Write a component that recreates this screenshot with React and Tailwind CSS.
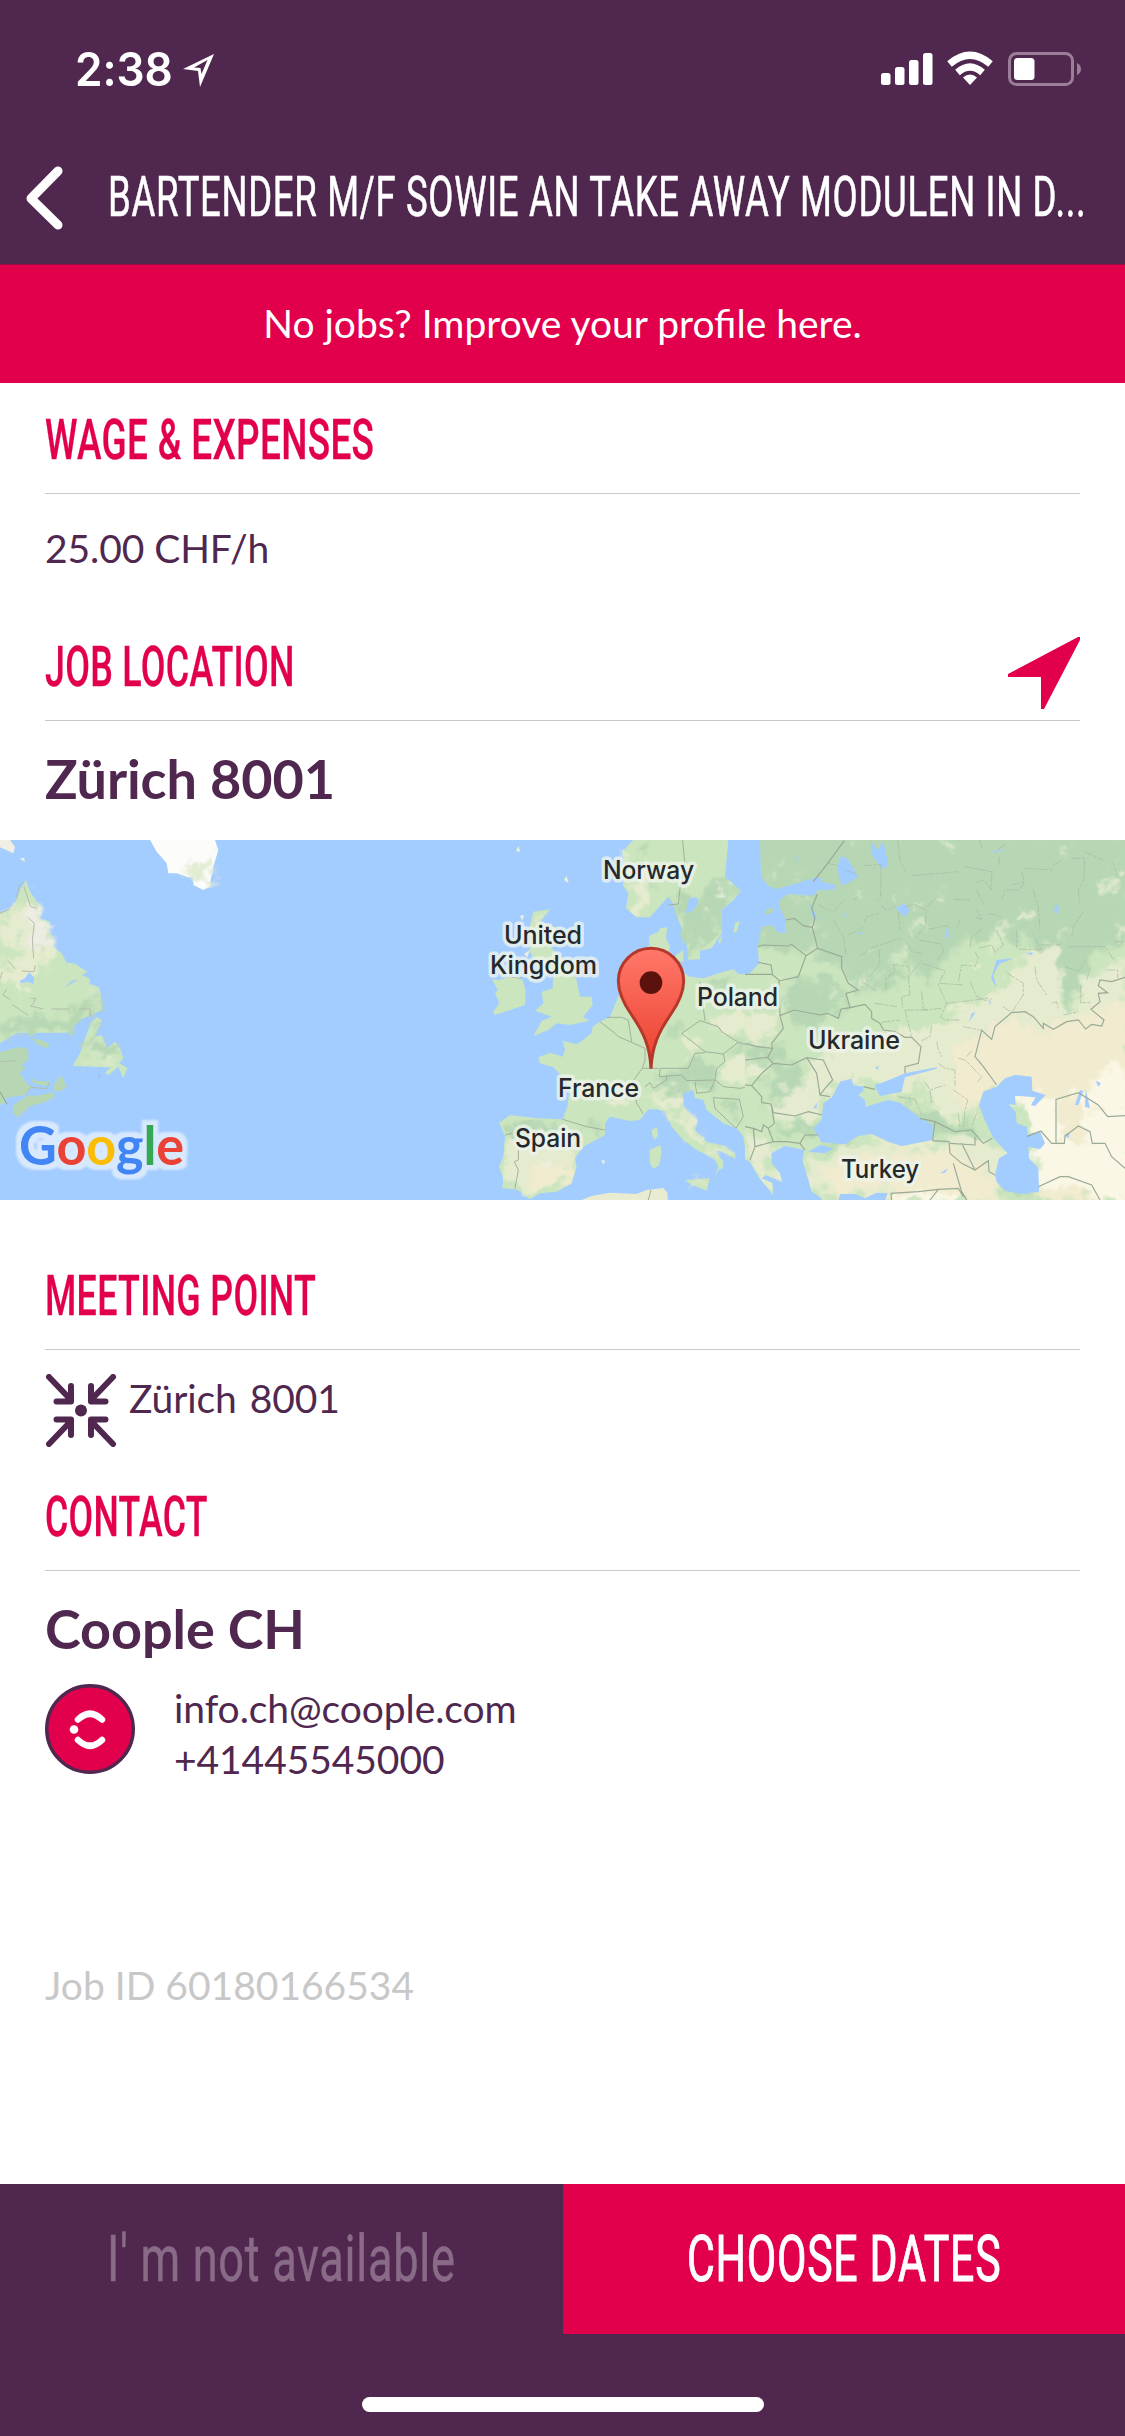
import { useLayoutEffect, useRef, useState } from "react";

/* Condensed display lettering: squeezed horizontally to a given width. */
function Condensed({ width, className = "", children }) {
  const ref = useRef(null);
  const [scale, setScale] = useState(0.6);
  useLayoutEffect(() => {
    setScale(width / ref.current.offsetWidth);
  }, [width]);
  return (
    <span className="block shrink-0 whitespace-nowrap" style={{ width }}>
      <span
        ref={ref}
        className={"inline-block origin-left font-['Roboto',sans-serif] " + className}
        style={{ transform: `scaleX(${scale})` }}
      >
        {children}
      </span>
    </span>
  );
}

function Heading({ className, width, children, icon }) {
  return (
    <div className={"mx-[45px] flex items-center justify-between border-b border-[#c8c8c8] " + className}>
      <Condensed width={width} className="text-[56px] leading-none font-medium tracking-[0.5px] text-[#e2004d] [-webkit-text-stroke:0.3px_#e2004d]">
        {children}
      </Condensed>
      {icon}
    </div>
  );
}

function StatusBar() {
  return (
    <div className="flex h-[138px] items-center justify-between pr-[43px] pl-[75px] text-white">
      <div className="flex items-center">
        <Condensed width={98} className="text-[46px] leading-none font-semibold !font-['Inter',sans-serif]">
          2:38
        </Condensed>
        <svg className="mt-[5px] ml-[9px]" width="32" height="35" viewBox="0 0 32 35">
          <path
            d="M32 0 18 33 16 17 1 15ZM25.500 6 12 13.500 18.500 14 19.500 20Z"
            fill="white"
            fillRule="evenodd"
          />
        </svg>
      </div>
      <svg width="201" height="36" viewBox="881 51 201 36" fill="white">
        <rect x="881" y="73" width="9.500" height="12" rx="2.500" />
        <rect x="895" y="67" width="9.500" height="18" rx="2.500" />
        <rect x="909" y="60" width="9.500" height="25" rx="2.500" />
        <rect x="923" y="53" width="9.500" height="32" rx="2.500" />
        <path d="M970 85 963 77.500Q970 71.500 977 77.500Z" />
        <g fill="none" stroke="white" strokeWidth="7">
          <path d="M949.500 64Q970 46.500 990.500 64" />
          <path d="M957.500 72.500Q970 61.500 982.500 72.500" />
        </g>
        <rect x="1009.500" y="53.500" width="63" height="31" rx="7" fill="none" stroke="#9b7f98" strokeWidth="3" />
        <rect x="1014" y="58" width="20.500" height="22" rx="3.500" />
        <path d="M1077 63Q1081 65 1081 69T1077 75Z" fill="#9b7f98" />
      </svg>
    </div>
  );
}

const MAP_LABELS = [
  { text: "Norway", x: 603, y: 39, w: 91 },
  { text: "United", x: 504, y: 104, w: 78 },
  { text: "Kingdom", x: 490, y: 134, w: 107 },
  { text: "Poland", x: 697, y: 166, w: 81 },
  { text: "Ukraine", x: 808, y: 209, w: 92 },
  { text: "France", x: 558, y: 257, w: 81 },
  { text: "Spain", x: 515, y: 307, w: 66 },
  { text: "Turkey", x: 841, y: 338, w: 78 },
];

function AmericaLand() {
  return (
    <g transform="translate(0 -10) scale(0.33333)">
      <g fill="#cbe5be">
        <path d="M0 250 20 242 45 220 60 180 78 150 90 185 125 235 120 265 150 275 150 305 163 335 160 350 185 370 200 398 222 400 262 425 245 435 268 445 270 462 298 472 306 520 303 542 270 555 235 572 200 608 50 608 0 640Z" />
        <path d="M0 30H30L45 50 40 70 0 52Z" fill="#f0efe4" />
        <path d="M60 85 72 83 75 97Z" fill="#f0efe4" />
        <path d="M290 562 305 570 285 620 305 615 322 655 345 635 360 655 370 685 358 700 382 715 370 745 355 710 325 735 315 728 332 712 218 708 240 670 255 625 275 575Z" />
      </g>
      <g fill="#b7d7b4">
        <path d="M0 665 60 650 85 658 85 690 65 705 77 712 60 730 80 760 95 772 75 795 20 803 15 818 0 825Z" />
        <path d="M85 795 40 825 38 850 55 862 90 828 130 818 165 800 160 785 110 798ZM182 735 200 770 185 783 160 782 162 765ZM90 738 105 752 150 755 140 768 100 760ZM95 623 130 632 150 645 140 655 110 643Z" />
      </g>
      <path d="M450 30 470 65 500 100 505 130 530 130 565 142 580 140 580 165 610 180 630 170 632 150 640 110 655 60 645 30Z" fill="#fcfcfb" />
      <g filter="url(#terrain)">
        <path d="M10 250 60 220 95 230 140 330 150 370 130 430 60 460 0 450V260Z" fill="#e5ebcf" />
        <path d="M85 190 120 250 145 300 130 350 90 330 80 260Z" fill="#eeede4" />
        <path d="M0 330 50 320 55 400 25 410 0 380ZM130 400 210 400 200 440 130 440Z" fill="#cbe5be" />
        <path d="M0 585 60 575 150 560 200 555 280 490 300 530 210 590 0 620ZM245 670 290 575 300 585 280 640 340 645 355 670 300 690 270 660Z" fill="#b7d7b4" />
        <path d="M550 140 575 90 580 130 640 70 635 120 610 170ZM230 700 300 690 350 680 340 700Z" fill="#e3ecd3" />
        <path d="M60 450 80 480 60 500ZM260 480 280 490 270 500ZM260 660 290 645 280 665Z" fill="#f4f0e0" />
      </g>
      <path d="M60 452 75 445 88 427 103 443 100 463 85 455 62 460ZM195 473 215 452 235 448Z" fill="#a3ccff" />
      <g className="fill-none stroke-[#b3bda9] stroke-[3]">
        <path d="M85 263 103 280 97 330 101 385M106 405 102 425 65 423M25 392 45 417M0 445 8 425M8 495 20 478M8 495 30 508M35 523 85 556M92 505H108L100 520 92 528 130 537M155 537H210M237 537H271V560M72 170 92 230 110 235M50 205 58 165 70 155M0 250 28 238M0 695 45 692M82 785 92 772 140 776 148 758M298 730V745" />
        <path d="M0 785 21 823" stroke="#8f9c8c" />
      </g>
    </g>
  );
}

function WestEurope() {
  return (
    <g transform="translate(370 -10) scale(0.33333)">
      <g fill="#cbe5be">
        <path d="M790 30 757 65 765 110 758 165 775 190 768 235 800 262 840 262 895 200 912 225 925 270 950 330 955 390 990 388 990 362 1025 355 1055 310 1055 240 1090 210 1113 183 1065 140 1075 30Z" />
        <path d="M838 345 837 318 865 305 870 295 892 292 888 325 900 350 890 380 920 415 960 440 1000 445 1060 425 1090 418 1105 432 1130 433V985L1120 920 1100 895 1060 880 1010 840 1000 810 975 805 970 780 938 790 942 830 980 875 975 900 1010 935 1065 948 1095 972 1097 988 1060 965 1035 960 1060 995 1058 1015 1045 1020 1030 1050 1045 1010 1035 990 1005 972 980 960 940 930 905 890 885 845 860 838 835 838 810 870 780 873 720 860 705 880 705 915 640 950 615 985 620 1010 605 1060 560 1085 510 1090 480 1108 440 1078 397 1075 400 1045 387 1010 400 980 405 920 388 878 420 855 500 865 578 868 592 830 597 790 585 750 550 712 510 700 505 682 540 668 578 680 585 660 578 632 620 643 640 630 665 608 668 590 690 575 720 560 745 500 760 450Z" />
        <path d="M490 245 540 238 510 275 555 290 555 320 540 350 575 380 600 420 620 450 630 500 665 500 668 525 640 560 658 572 600 585 560 580 535 600 490 618 515 572 545 560 495 542 520 520 515 485 548 475 550 430 510 420 480 365 475 310Z" />
        <path d="M366 447 385 450 420 440 455 445 467 480 465 525 375 555 370 545 388 520 375 490 383 480Z" />
        <path d="M845 900 860 892 865 915 855 930 847 915ZM838 960 870 945 875 965 868 1005 850 1017 840 1000ZM945 1050 1020 1045 1010 1082 960 1062ZM915 378 940 360 940 398 920 390ZM1095 280 1110 272 1100 305 1090 308ZM1045 330 1057 315 1050 345Z" />
        <path d="M582 150 590 138 596 160ZM438 62 446 48 450 66ZM450 257 462 255 457 272ZM693 992 704 990 702 1004ZM462 372 480 360 472 382Z" fill="#eef0dd" />
      </g>
      <path d="M635 1110 665 1098 720 1088 800 1092 830 1080 880 1074 893 1090V1110Z" fill="#e9ecd0" />
      <clipPath id="west-land">
        <path d="M745 30H1075L1065 140 1113 183 1055 240V310L990 362V390L960 440 1090 418 1130 433V985L1060 880 1010 840 970 780 938 790 942 830 885 845 850 838 780 873 705 865 705 915 640 950 615 985 620 1010 605 1060 560 1085 480 1108 397 1070 405 920 395 870 578 868 597 790 590 740 690 575 745 500 838 345 890 380 960 440 950 380 895 200 800 262 768 235Z" />
      </clipPath>
      <g filter="url(#terrain)" clipPath="url(#west-land)">
        <path d="M910 200 1000 190 1060 140 1110 185 1055 240 1050 310 990 360 960 380 930 280Z" fill="#b7d7b4" />
        <path d="M400 880 570 875 560 900 420 925ZM860 740 910 720 990 690 1040 720 1040 770 940 780 860 780ZM640 890 700 880 695 925ZM1010 460 1090 430 1060 480ZM1080 650 1130 640V680ZM880 600 930 580 930 620ZM1050 820 1100 800 1100 870ZM800 190 830 110 860 170ZM790 60 850 40 830 90Z" fill="#b7d7b4" />
        <path d="M410 930 500 905 600 940 610 1000 590 1060 470 1090 400 1070ZM820 790 900 790 930 770 935 830 850 830ZM690 815 770 770 790 820 740 850ZM1010 560 1130 550V620L1050 600ZM1060 700 1130 670V760L1060 760ZM930 620 1000 640 950 680ZM800 100 850 110 830 240 785 240Z" fill="#e5ebcf" />
        <path d="M470 1020 600 1000 590 1060 480 1070ZM560 910 610 930 590 950Z" fill="#f1ebcf" />
        <path d="M1000 240 1030 250 1000 258ZM1050 170 1090 190 1050 200ZM750 60 770 90 760 110ZM520 1000 540 990 545 1015Z" fill="#f5f3e6" />
      </g>
      <g fill="#e5ebcf" filter="url(#terrain)">
        <path d="M900 860 950 850 1000 930 980 940ZM1010 950 1080 965 1040 980ZM970 1055 1010 1055 1000 1070ZM495 250 530 245 500 280 485 300Z" />
      </g>
      <path d="M958 205 980 202 985 220 965 245 947 250Z" fill="#a3ccff" />
      <g className="fill-none stroke-[#a3b09d] stroke-[3]">
        <path d="M938 30 945 110 930 175 925 222 895 225M578 868 650 890 705 900M690 575 735 610 745 620 780 635 825 655M710 562 755 562 775 570 785 635M825 655 825 690 817 715 787 755M817 715H865M935 610 990 572 1045 590 1055 605 1105 637 1060 672 1005 665 935 610M990 455 1005 572M1105 637 1130 645M1005 668 975 670 955 715 870 715 868 740 935 735 950 752 1035 750 1040 715 1065 695 1060 672M825 770 840 758 850 775 890 750 890 735M787 755 800 820 820 852M1035 750 1060 770 1110 775 1140 770M975 755 980 790 1020 785 1035 750M1030 803 1108 808 1120 860 1098 895 1035 835ZM445 960 445 990 433 995 445 1020 435 1075M405 915 425 910M843 1080 835 1110M410 440 455 445" />
      </g>
    </g>
  );
}

function EastEurope() {
  return (
    <g transform="translate(745 -10) scale(0.33333)">
      <path d="M0 30H1140V1110H0Z" fill="#cbe5be" />
      <g filter="url(#terrain)">
        <path d="M-10 0H1160V330L1040 370 1000 480 975 545 950 500 940 370 860 340 750 320 640 350 590 390 560 470 480 370 400 430 350 490 270 400 200 370 50 350 20 290 60 200Z" fill="#b7d7b4" />
        <path d="M110 480 200 440 290 460 300 540 180 590 110 545ZM60 740 140 700 190 770 170 800 60 820ZM0 640 90 640 130 700 0 690ZM480 810 600 870 700 890 720 930 560 910 480 830ZM90 900 220 880 200 915 110 930ZM380 490 420 400 500 420 440 460ZM220 940 330 930 300 960ZM750 1060 860 1100 800 1110Z" fill="#b7d7b4" />
        <path d="M0 550 110 560 60 640 0 620ZM190 690 280 660 440 610 540 600 600 560 780 470 860 350 940 350 950 540 1000 540 1010 440 1140 390V560L880 610 700 620 690 700 620 760 660 870 560 830 540 760 480 790 400 770 300 740 230 790 160 860 90 820 190 760Z" fill="#e5ebcf" />
        <path d="M0 700 60 690 60 740 0 780ZM90 830 220 820 200 880 90 870ZM0 890 90 950 60 1000 110 1060 80 1100 0 990ZM180 990 370 935 560 950 720 920 790 970 750 1090 420 1100 200 1090Z" fill="#e5ebcf" />
        <path d="M620 650 700 620 800 560 900 600 1010 560 1100 520 1160 510V1110H880V800H780L715 780 660 860 620 760ZM230 1010 500 960 620 960 730 1040 760 1110H440L420 1080 250 1080Z" fill="#f1ebcf" />
        <path d="M800 790 900 790 960 810 1060 760 1090 710 1160 730V1110H1080L960 1060 880 1070 860 900ZM440 1090H640V1120H440ZM1000 890 1040 880 1050 930Z" fill="#faf7e6" />
        <path d="M920 820 1000 790 1030 850 1010 910 1040 940 960 940ZM1050 820 1080 850 1040 850Z" fill="#f1ebcf" />
        <path d="M80 100 100 110 95 160 70 140ZM310 30 350 30 330 60ZM230 480 280 490 250 510Z" fill="#cbe5be" />
        <g fill="#e3ecce">
          <circle cx="612" cy="40" r="12" />
          <circle cx="152" cy="145" r="7" />
          <circle cx="170" cy="207" r="8" />
          <circle cx="340" cy="190" r="8" />
          <circle cx="435" cy="210" r="9" />
          <circle cx="518" cy="207" r="8" />
          <circle cx="580" cy="202" r="10" />
          <circle cx="522" cy="285" r="12" />
          <circle cx="460" cy="375" r="9" />
          <circle cx="380" cy="370" r="8" />
          <circle cx="500" cy="310" r="9" />
          <circle cx="780" cy="280" r="12" />
          <circle cx="840" cy="265" r="16" />
          <circle cx="765" cy="310" r="16" />
          <circle cx="740" cy="345" r="12" />
          <circle cx="962" cy="60" r="10" />
          <circle cx="955" cy="300" r="8" />
          <circle cx="1115" cy="300" r="14" />
          <circle cx="1090" cy="170" r="16" />
          <circle cx="1125" cy="120" r="16" />
          <circle cx="220" cy="295" r="10" />
          <circle cx="265" cy="490" r="9" />
          <circle cx="350" cy="450" r="12" />
          <circle cx="115" cy="770" r="12" />
          <circle cx="110" cy="450" r="8" />
          <circle cx="690" cy="410" r="12" />
        </g>
      </g>
      <g fill="#a3ccff">
        <path d="M-2 28H45L48 140 70 168 95 178 205 145 225 142 232 155 270 165 270 178 220 180 205 197 130 192 103 210 105 235 122 270 120 310 95 305 82 285 50 290 38 350 42 400 15 430-2 433Z" />
        <path d="M290 75 310 90 340 140 315 155 290 168 275 110ZM378 35 400 60 415 32 430 105 412 118 378 70ZM452 235 475 220 495 240 480 262ZM605 295H611L610 330 603 320ZM925 240 940 220V255ZM195 220 205 235 215 270 205 275ZM745 65 785 53 750 70ZM336 308 350 305 348 315ZM292 252 305 253 298 262ZM390 712 402 708 398 720ZM150 78H155V100ZM610 30 628 43Z" />
        <path d="M285 755 320 746 325 765 355 770 355 782 340 795 360 810 362 830 430 810 465 818 520 860 563 885V930L470 948 430 935 380 912 340 918 300 943 230 937 205 895 230 870 235 820 262 800Z" />
        <path d="M388 765 420 755 480 730 575 712V716L480 742 470 785 405 798ZM205 835 215 818V835Z" />
        <path d="M715 785 755 770 780 745 810 735 860 740 862 782 902 795 870 828 858 825 872 802 810 797 812 825 790 823 812 845 815 880 845 890 848 915 885 903 900 940 885 958 850 950 852 985 880 1015 882 1085 830 1092 780 1082 755 1055 750 1035 762 985 788 970 745 925 715 860 702 825Z" />
        <path d="M-2 988 15 995 40 1040 85 1095 82 1058 50 1045 62 1035 112 1056 105 1030 80 1000 80 970 118 948 178 960 172 990 190 1050 200 1085 230 1105V1112H-2ZM190 965 225 945 265 955 240 970ZM280 1112 285 1092 330 1092 360 1105 395 1088 428 1090 420 1112ZM1005 780 990 825 1000 825 1015 782ZM1022 778 1035 835 1020 830ZM585 1030 610 1015 600 1028ZM1052 752 1068 760 1060 770ZM958 915 975 905 970 925ZM738 445 755 390 805 385 762 402 745 435 755 475ZM672 575 680 550 692 547ZM730 525 738 512V520ZM840 368H865L860 375Z" />
      </g>
      <path d="M60 240 90 232 80 250 62 255Z" fill="#b7d7b4" />
      <g fill="none" stroke="#9aaa97" strokeWidth="3.500">
        <path d="M205 155 248 100 298 32M217 192 200 235 210 265 202 292 218 355 290 380 290 415 310 460 340 480 303 490 315 533 288 537 280 565 248 550 225 555 148 540 105 557 102 450 83 435 78 405 40 397M0 433H83M122 270 148 265 175 287 202 292M40 350 55 345 130 348 140 343 183 377 160 440 102 453M183 377 218 355M105 557 115 595 80 640 83 655 68 682 85 700 140 705 185 683 235 690 263 750 240 775 225 795 215 730 185 683M0 640 35 650 83 655M0 690 68 682M315 533 360 523 380 545V565L405 580 415 600 450 605 480 622 500 622 528 650 520 700 480 710V730M85 700 50 730 20 767 0 765M20 767 50 800 50 818 78 822 85 848 150 858 190 845 232 855M78 822 88 880 70 895 85 935 125 935 165 940 180 915 220 915M0 890 25 895 50 905 55 885 70 895M25 895 30 950 85 935M30 950 15 990M165 940 180 960M255 800 225 795M355 770 390 778M440 1110 438 1090 520 1085 580 1078 640 1075 655 1100M525 865 570 875 630 905 680 900 715 940 742 925M563 932 612 935 615 970 650 1000 690 1020 730 992 732 1025 750 1035M570 875 563 930M615 940 690 945 690 920M650 940 690 1020M625 1000 650 1085 665 1110M755 765 715 710 690 680 710 600 740 628 750 590 800 548 840 545 865 560 895 595 895 580 925 598 965 575 1000 570 1022 597 1040 583 1070 588 1077 570 1038 538 1065 515 1060 490 1088 488 1060 467 1065 450 1100 455 1140 442M555 1110 580 1078" />
        <path d="M933 940V808L1000 788 1060 825 1088 860 1140 857M845 920 888 903 920 940H958L960 918 1000 888 1035 905 1042 940H1080L1100 980 1140 1015M880 1070 945 1040 970 1040 1040 1065 1065 1110" />
      </g>
      <g fill="none" stroke="#a6b7a3" strokeOpacity="0.8" strokeWidth="2.500" strokeDasharray="26 4 9 4">
        <path d="M458 30 465 90 480 125M500 137 640 125M660 110 740 125V180L715 150 690 160M765 80 760 110M840 115 925 120M925 105 950 90M980 85H1018V145L1000 180 1005 220M1018 65 1075 90M1105 100 1120 145M830 125 838 155 800 165M838 155 825 180 780 180 770 210M865 180 880 230 885 300M1015 245 985 290 980 320M705 30 710 55M780 45 755 60M248 100 280 107M300 120 340 135M355 107 408 103 407 200 390 215M265 245 300 207M220 225 260 245M325 210 340 200M358 275 365 260 400 250M265 270 295 320 303 375M310 315 355 292M375 355 465 325M345 378 372 360M408 225 425 243 450 230M460 245 465 300M480 232 505 222 545 240 540 290 510 325M485 335 500 365 530 370M520 330 590 342 595 365 575 395M550 298 605 287 615 295M635 293 645 270M545 230 575 200M625 208 675 210M695 180 718 225M690 262 710 268 695 240M730 250 770 260M815 300V355M820 357 890 360 870 325M888 345H945M970 350 1080 350 1105 388M1108 335H1140M675 350 680 320 715 295M700 355 740 345 750 368 775 345 755 300M403 360V405L372 440M350 455 395 483M423 480 422 445 450 425 445 403 490 410 495 435 530 390M530 400 600 422 580 465 605 520 587 560 600 570H645M490 435 495 495 470 500 473 535M480 540H550M480 540 500 622M530 485 535 540 590 535M605 520 730 505M585 460 655 465M640 455 650 405 690 408M690 365 700 385 690 410M675 455 695 500 730 515 740 505M775 530 800 548M800 548 835 495 835 460 780 425M870 410 875 450 905 495M920 520 935 515 940 535M955 555 1000 545M1007 465V518H1040M1025 450 1035 415M1085 420H1118V445M960 410 1000 425 1025 385M390 520 455 530M410 577 465 570M560 585 555 620 530 632M575 635 580 660 590 680M655 590 705 600M640 685 660 690 710 740 695 760M665 680 680 662M580 700 600 715 630 720V765M540 755 555 780 600 765M555 780 560 820M625 780 668 810 660 840 655 890M570 840 585 855M640 850 645 890M695 850 680 890M460 800 510 808 530 855" />
      </g>
    </g>
  );
}

function MapView() {
  return (
    <svg className="block h-[360px] w-full shrink-0 bg-[#a3ccff]" viewBox="0 0 1125 360">
      <defs>
        <filter id="terrain" x="-5%" y="-5%" width="110%" height="110%" colorInterpolationFilters="sRGB">
          <feGaussianBlur stdDeviation="8" result="soft" />
          <feTurbulence type="fractalNoise" baseFrequency="0.022" numOctaves="3" seed="4" result="noise" />
          <feDisplacementMap in="soft" in2="noise" scale="90" xChannelSelector="R" yChannelSelector="G" />
        </filter>
        <filter id="halo" x="-10%" y="-20%" width="120%" height="140%" colorInterpolationFilters="sRGB">
          <feMorphology in="SourceAlpha" operator="dilate" radius="5" result="grown" />
          <feGaussianBlur in="grown" stdDeviation="1" result="rounded" />
          <feFlood floodColor="#d9e9fd" />
          <feComposite in2="rounded" operator="in" result="outline" />
          <feMerge>
            <feMergeNode in="outline" />
            <feMergeNode in="SourceGraphic" />
          </feMerge>
        </filter>
        <linearGradient id="pin" x1="0" y1="0" x2="0" y2="1">
          <stop offset="0" stopColor="#ff7869" />
          <stop offset="1" stopColor="#ec3f2d" />
        </linearGradient>
      </defs>
      <AmericaLand />
      <WestEurope />
      <svg x="745" y="0" width="380" height="360" viewBox="745 0 380 360">
        <EastEurope />
      </svg>
      <g
        className="font-['Inter',sans-serif] text-[25px] font-medium"
        fill="#26292c"
        stroke="#edf4ec"
        strokeOpacity="0.8"
        strokeWidth="7"
        strokeLinejoin="round"
        paintOrder="stroke"
      >
        {MAP_LABELS.map((l) => (
          <text key={l.text} x={l.x} y={l.y} textLength={l.w} lengthAdjust="spacingAndGlyphs">
            {l.text}
          </text>
        ))}
      </g>
      <g transform="translate(370 -10) scale(0.33333)">
        <path
          d="M843 716C840 650 820 605 785 555 757 515 745 485 745 453A98 98 0 0 1 941 453C941 485 929 515 901 555 866 605 846 650 843 716Z"
          fill="url(#pin)"
          stroke="#b5382a"
          strokeWidth="9"
        />
        <circle cx="843" cy="458" r="34" fill="#5b120d" />
      </g>
      <text
        className="font-['Lato',sans-serif] text-[54px] font-bold"
        x="19"
        y="325"
        textLength="165"
        lengthAdjust="spacingAndGlyphs"
        filter="url(#halo)"
      >
        <tspan fill="#4285f4">G</tspan>
        <tspan fill="#ea4335">o</tspan>
        <tspan fill="#fbbc05">o</tspan>
        <tspan fill="#4285f4">g</tspan>
        <tspan fill="#34a853">l</tspan>
        <tspan fill="#ea4335">e</tspan>
      </text>
    </svg>
  );
}

export default function App() {
  return (
    <div className="flex h-[2436px] w-[1125px] flex-col overflow-hidden bg-white font-['Lato',sans-serif] text-[39px] leading-none tracking-[-0.08px] text-[#50284f] [font-variant-ligatures:common-ligatures]">
      <header className="h-[265px] shrink-0 border-b border-[#a00a45] bg-[#50284f]">
        <StatusBar />
        <div className="flex h-[119px] items-center">
          <svg className="ml-[26px] shrink-0" width="37" height="64" viewBox="0 0 37 64">
            <path d="M32 5 5 32.500 32 59" fill="none" stroke="white" strokeWidth="9" strokeLinecap="round" strokeLinejoin="round" />
          </svg>
          <h1 className="ml-[45px]">
            <Condensed width={978} className="text-[55px] leading-none font-normal tracking-[1px] text-white [-webkit-text-stroke:0.6px_white]">
              BARTENDER M/F SOWIE AN TAKE AWAY MODULEN IN D...
            </Condensed>
          </h1>
        </div>
      </header>
      <div className="flex h-[118px] shrink-0 items-center justify-center bg-[#e2004d] pb-[1px] tracking-normal text-white">
        No jobs? Improve your profile here.
      </div>

      <Heading className="h-[111px] shrink-0 pt-[4px]" width={329}>WAGE &amp; EXPENSES</Heading>
      <div className="flex h-[108px] shrink-0 items-center px-[45px]">25.00 CHF/h</div>

      <Heading
        className="h-[119px] shrink-0 pt-[12px]"
        width={250}
        icon={
          <svg className="mt-[12px]" width="72" height="72" viewBox="0 0 72 72" fill="#e2004d">
            <path d="M70 0H72V3L36 72H33V40H0V37Z" />
          </svg>
        }
      >
        JOB LOCATION
      </Heading>
      <div className="flex h-[119px] shrink-0 items-center px-[45px] pb-[4px] text-[54px] font-bold">Zürich 8001</div>

      <MapView />

      <Heading className="h-[150px] shrink-0 pt-[43px]" width={271}>MEETING POINT</Heading>
      <div className="flex h-[100px] shrink-0 items-start px-[45px] pt-[24px]">
        <svg width="72" height="73" viewBox="0 0 72 73">
          <g fill="none" stroke="#50284f" strokeWidth="6" strokeLinecap="round" strokeLinejoin="round">
            <path d="M4 3 26 26M26 12V27.500H11.500M68 3 46 26M46 12V27.500H60.500M4 70 26 47M26 61V45.500H11.500M68 70 46 47M46 61V45.500H60.500" />
          </g>
          <circle cx="36" cy="36.500" r="6" fill="#50284f" />
        </svg>
        <span className="mt-[5px] ml-[12px] whitespace-pre [word-spacing:3px]">Zürich 8001</span>
      </div>

      <Heading className="h-[121px] shrink-0 pt-[14px]" width={163}>CONTACT</Heading>
      <div className="flex h-[113px] shrink-0 items-center px-[45px] pt-[2px] text-[54px] font-bold">Coople CH</div>
      <div className="flex h-[90px] shrink-0 items-start px-[45px]">
        <svg width="90" height="90" viewBox="0 0 90 90">
          <circle cx="45" cy="45" r="43.300" fill="#e2004d" stroke="#50284f" strokeWidth="3.400" />
          <g fill="none" stroke="white" strokeWidth="6.500" strokeLinecap="round">
            <path d="M33 35.500Q45 24 57 35.500M33 56Q45 67.500 57 56" />
          </g>
          <circle cx="29" cy="45.500" r="4.300" fill="white" />
        </svg>
        <div className="-mt-px ml-[39px] leading-[51px]">
          <div>info.ch@coople.com</div>
          <div>+41445545000</div>
        </div>
      </div>
      <div className="mt-[192px] px-[45px] tracking-normal text-[#c8c8c8]">Job ID 60180166534</div>

      <footer className="mt-auto h-[252px] shrink-0 bg-[#50284f]">
        <div className="grid h-[150px] grid-cols-[563px_562px]">
          <button className="flex items-center justify-center">
            <Condensed width={349} className="text-[65px] leading-none font-normal tracking-[1px] text-[#896b88] [-webkit-text-stroke:0.5px_#896b88]">
              I<span className="tracking-[18px]">'</span>m not available
            </Condensed>
          </button>
          <button className="flex items-center justify-center bg-[#e2004d]">
            <Condensed width={314} className="text-[65px] leading-none font-normal tracking-[1px] text-white [-webkit-text-stroke:1px_white]">
              CHOOSE DATES
            </Condensed>
          </button>
        </div>
        <div className="mx-auto mt-[63px] h-[15px] w-[402px] rounded-full bg-white" />
      </footer>
    </div>
  );
}
